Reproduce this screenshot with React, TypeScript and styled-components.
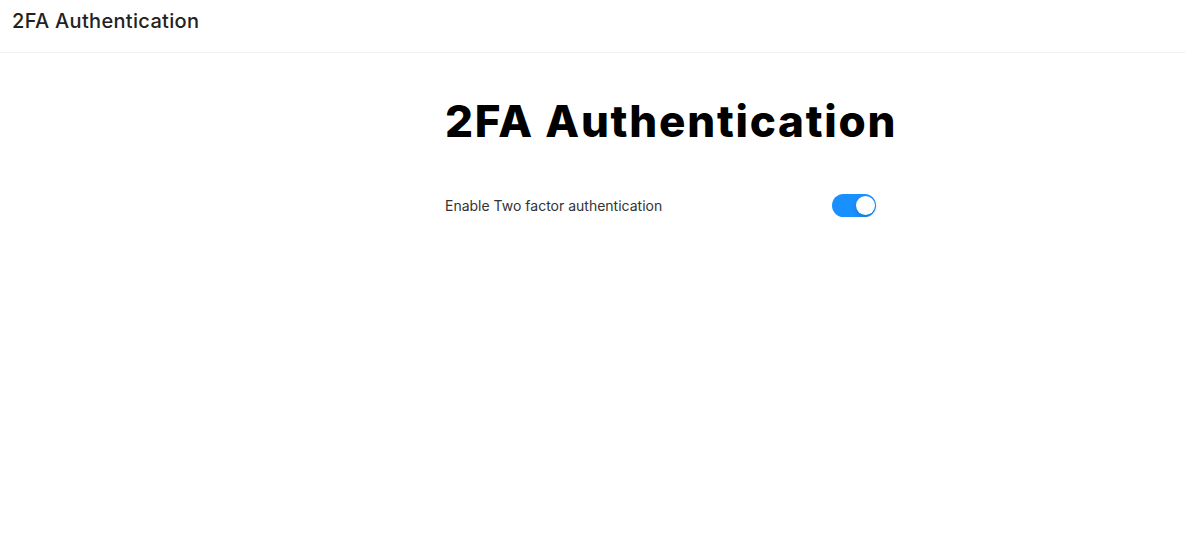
import * as React from "react";
import styled, { createGlobalStyle } from "styled-components";

const GlobalStyle = createGlobalStyle`
  html, body {
    margin: 0;
    padding: 0;
    background: #ffffff;
    font-family: Inter, "Noto Sans", sans-serif;
    color: #222;
  }
`;

const TopBar = styled.header`
  height: 53px;
  box-sizing: border-box;
  display: flex;
  align-items: center;
  padding: 0 12px;
  border-bottom: 1px solid #f0f0f0;
`;

const TopTitle = styled.div`
  font-size: 20px;
  font-weight: 500;
  color: #222;
  padding-bottom: 10px;
  letter-spacing: 0.32px;
`;

const Main = styled.main`
  padding-left: 445px;
`;

const Panel = styled.section`
  width: 452px;
  display: flex;
  flex-direction: column;
`;

const Heading = styled.h1`
  margin: 42px 0 0;
  text-align: center;
  white-space: nowrap;
  font-size: 44px;
  font-weight: 800;
  letter-spacing: 1.75px;
  color: #000;
  line-height: 52px;
`;

const SettingRow = styled.div`
  margin-top: 47px;
  display: flex;
  align-items: center;
  justify-content: space-between;
  padding-right: 21px;
`;

const Label = styled.span`
  font-size: 14px;
  color: #333;
`;

const SwitchTrack = styled.button<{ $on: boolean }>`
  width: 44px;
  height: 23px;
  border: 0;
  padding: 0;
  border-radius: 12px;
  background: ${p => (p.$on ? "#1890ff" : "#bfbfbf")};
  position: relative;
  cursor: pointer;
  outline: none;
`;

const Knob = styled.span<{ $on: boolean }>`
  position: absolute;
  top: 2px;
  left: ${p => (p.$on ? "24px" : "2px")};
  width: 19px;
  height: 19px;
  border-radius: 50%;
  background: #fff;
  box-shadow: 0 2px 4px rgba(0, 35, 11, 0.2);
  transition: left 0.2s;
`;

export default function App() {
  const [on, setOn] = React.useState(true);
  return (
    <>
      <GlobalStyle />
      <TopBar>
        <TopTitle>2FA Authentication</TopTitle>
      </TopBar>
      <Main>
        <Panel>
          <Heading>2FA Authentication</Heading>
          <SettingRow>
            <Label>Enable Two factor authentication</Label>
            <SwitchTrack $on={on} onClick={() => setOn(!on)} aria-checked={on} role="switch">
              <Knob $on={on} />
            </SwitchTrack>
          </SettingRow>
        </Panel>
      </Main>
    </>
  );
}
